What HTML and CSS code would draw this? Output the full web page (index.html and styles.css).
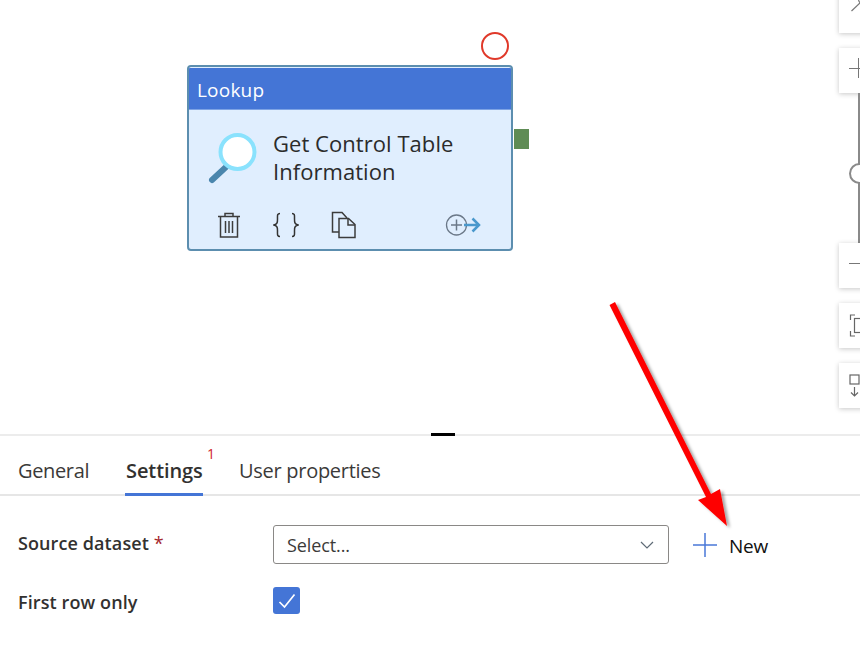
FILE: index.html
```html
<!DOCTYPE html>
<html lang="en">
<head>
<meta charset="utf-8">
<title>Lookup activity</title>
<link rel="stylesheet" href="styles.css">
</head>
<body>
<div class="page">
  <section class="canvas">
    <div class="status-circle"></div>
    <div class="node">
      <div class="node-head">Lookup</div>
      <div class="node-body">
        <div class="node-main">
          <svg class="lookup-icon" width="50" height="52" viewBox="0 0 50 52">
            <path d="M4 48 L18 35" stroke="#4a86ad" stroke-width="6" stroke-linecap="round" fill="none"/>
            <circle cx="29.500" cy="20" r="17" fill="#fff" stroke="#8ae2fd" stroke-width="4"/>
          </svg>
          <div class="node-title">Get Control Table<br>Information</div>
        </div>
        <div class="node-actions">
          <svg class="act-trash" width="24" height="28" viewBox="0 0 24 28" fill="none" stroke="#3c3c3c">
            <path d="M1 5.500H23M8 5V2.500H16V5" stroke-width="1.500"/>
            <path d="M3.500 6V26H20.500V6" stroke-width="1.500"/>
            <path d="M8.500 10V22M12 10V22M15.500 10V22" stroke-width="1.500"/>
          </svg>
          <svg class="act-code" width="26" height="28" viewBox="0 0 26 28" fill="none" stroke="#333" stroke-width="1.500">
            <path d="M7 2.500C4 2.500 4.500 4.500 4.500 8C4.500 11.500 4.500 13 1 14C4.500 15 4.500 16.500 4.500 20C4.500 23.500 4 25.500 7 25.500"/>
            <path d="M19 2.500C22 2.500 21.500 4.500 21.500 8C21.500 11.500 21.500 13 25 14C21.500 15 21.500 16.500 21.500 20C21.500 23.500 22 25.500 19 25.500"/>
          </svg>
          <svg class="act-copy" width="26" height="28" viewBox="0 0 26 28" fill="none" stroke="#3c3c3c" stroke-width="1.500">
            <path d="M8 21H1.500V1.500H11L16 7"/>
            <path d="M8 7.500H17.500L24 13.500V26.500H8Z"/>
            <path d="M17 8V14H24"/>
          </svg>
          <svg class="act-add" width="36" height="24" viewBox="0 0 36 24" fill="none">
            <circle cx="11.500" cy="12" r="10" stroke="#6b7888" stroke-width="1.300"/>
            <path d="M6 12H17M11.500 6.500V17.500" stroke="#6b7888" stroke-width="1.500"/>
            <path d="M19 12H34M27.500 5.500L34 12L27.500 18.500" stroke="#4a98cc" stroke-width="2.500"/>
          </svg>
        </div>
      </div>
    </div>
    <div class="node-port"></div>

    <div class="tool tool-search">
      <svg width="20" height="20" viewBox="0 0 20 20" fill="none" stroke="#777" stroke-width="1.200"><circle cx="14" cy="6" r="5.500"/><path d="M10 10L1.500 18"/></svg>
    </div>
    <div class="tool tool-plus"><span class="bar-h"></span><span class="bar-v"></span></div>
    <div class="slider-track"></div>
    <div class="slider-thumb"></div>
    <div class="tool tool-minus"><span class="bar-h"></span></div>
    <div class="tool tool-fit">
      <svg width="20" height="24" viewBox="0 0 20 24" fill="none" stroke="#666" stroke-width="1.200"><path d="M6 1H1.500V6M1.500 17V22H6"/><rect x="5.500" y="4.500" width="16" height="14"/></svg>
    </div>
    <div class="tool tool-layout">
      <svg width="20" height="24" viewBox="0 0 20 24" fill="none" stroke="#666" stroke-width="1.200"><rect x="1" y="1" width="9" height="9"/><path d="M5.500 13V22M2 18.500L5.500 22L9 18.500"/></svg>
    </div>
    <div class="handle"></div>
  </section>

  <section class="panel">
    <nav class="tabs">
      <div class="tab tab-general">General</div>
      <div class="tab tab-active">Settings<sup class="tab-badge">1</sup></div>
      <div class="tab tab-user">User properties</div>
    </nav>
    <div class="form">
      <div class="row row-source">
        <label class="field-label">Source dataset <span class="req">*</span></label>
        <div class="select">
          <span>Select...</span>
          <svg width="14" height="8" viewBox="0 0 14 8" fill="none" stroke="#5f6b76" stroke-width="1.200"><path d="M1 1L7 7L13 1"/></svg>
        </div>
        <div class="new-btn">
          <svg width="24" height="24" viewBox="0 0 24 24" fill="none" stroke="#4a78d8" stroke-width="1.500"><path d="M0 12H24M12 0V24"/></svg>
          <span>New</span>
        </div>
      </div>
      <div class="row row-first">
        <label class="field-label">First row only</label>
        <div class="checkbox">
          <svg width="18" height="16" viewBox="0 0 18 16" fill="none" stroke="#fff" stroke-width="1.700"><path d="M1.500 9L6.500 14L16.500 1.500"/></svg>
        </div>
      </div>
    </div>
  </section>

  <svg class="annotation" width="860" height="669" viewBox="0 0 860 669">
    <defs>
      <filter id="arrow-shadow" x="-20%" y="-20%" width="140%" height="140%"><feDropShadow dx="3" dy="2" stdDeviation="1.500" flood-color="#000" flood-opacity="0.350"/></filter>
    </defs>
    <g filter="url(#arrow-shadow)">
      <path d="M609.500 305L615 302L711 494L720 489L727 526L698 500L706 497Z" fill="#fe0000"/>
    </g>
  </svg>
</div>
</body>
</html>
```

FILE: styles.css
```css
* { box-sizing: border-box; }

html, body {
  margin: 0;
  padding: 0;
  background: #fff;
}

.page {
  position: relative;
  width: 860px;
  height: 669px;
  overflow: hidden;
  font-family: "Open Sans", "Noto Sans", sans-serif;
  color: #323130;
}

.canvas {
  position: relative;
  height: 434px;
}

.status-circle {
  position: absolute;
  left: 481px;
  top: 32px;
  width: 28px;
  height: 28px;
  border: 2px solid #e0392a;
  border-radius: 50%;
}

.node {
  position: absolute;
  left: 187px;
  top: 65px;
  width: 326px;
  height: 186px;
  background: #e0eefe;
  border: 2px solid #5c8eaf;
  border-radius: 4px;
  padding-top: 1px;
  overflow: hidden;
}

.node-head {
  height: 42px;
  padding-left: 8px;
  background: #4475d6;
  border-bottom: 1px solid #7ea3e4;
  color: #fff;
  font-size: 19px;
  line-height: 44px;
  letter-spacing: 0.200px;
}

.node-main {
  display: flex;
  padding: 21px 0 0 19px;
  gap: 15px;
}

.lookup-icon {
  flex: none;
  margin-top: 1px;
}

.node-title {
  font-size: 22px;
  line-height: 28px;
  letter-spacing: 0.050px;
  color: #2b2b2b;
  margin-top: -2px;
}

.node-actions {
  display: flex;
  align-items: center;
  padding-left: 28px;
  margin-top: 26px;
}

.act-code { margin-left: 32px; }
.act-copy { margin-left: 32px; }
.act-add { margin-left: 88px; }

.node-port {
  position: absolute;
  left: 514px;
  top: 129px;
  width: 15px;
  height: 20px;
  background: #5f8c55;
}

.tool {
  position: absolute;
  left: 839px;
  width: 40px;
  height: 45px;
  background: #fff;
  box-shadow: 0 1px 5px rgba(0, 0, 0, 0.220);
}

.tool-search { top: -12px; }
.tool-plus { top: 48px; }
.tool-minus { top: 243px; }
.tool-fit { top: 303px; }
.tool-layout { top: 363px; }

.tool svg {
  position: absolute;
  left: 10px;
  top: 11px;
}

.tool-search svg { top: 5px; left: 11px; }

.bar-h {
  position: absolute;
  left: 10px;
  top: 20px;
  width: 20px;
  height: 1px;
  background: #777;
}

.bar-v {
  position: absolute;
  left: 19px;
  top: 10px;
  width: 1px;
  height: 20px;
  background: #777;
}

.slider-track {
  position: absolute;
  left: 858px;
  top: 93px;
  width: 2px;
  height: 150px;
  background: #8a8a8a;
}

.slider-thumb {
  position: absolute;
  left: 849px;
  top: 163px;
  width: 21px;
  height: 21px;
  background: #fff;
  border: 2px solid #8a8a8a;
  border-radius: 50%;
}

.handle {
  position: absolute;
  left: 431px;
  top: 433px;
  width: 24px;
  height: 3px;
  background: #000;
}

.panel {
  border-top: 2px solid #ececec;
}

.tabs {
  display: flex;
  height: 60px;
  padding-left: 18px;
  border-bottom: 2px solid #e6e6e6;
}

.tab {
  position: relative;
  height: 60px;
  font-size: 20px;
  line-height: 70px;
  white-space: nowrap;
  color: #3b3a39;
}

.tab-general { letter-spacing: -0.350px; width: 107px; }
.tab-user { letter-spacing: -0.280px; margin-left: 36px; }

.tab-active {
  font-weight: 600;
  border-bottom: 3px solid #4475d6;
  color: #323130;
  width: 78px;
  letter-spacing: -0.100px;
  text-indent: 1px;
}

.tab-badge {
  position: absolute;
  left: 81px;
  top: 9px;
  font-size: 14px;
  font-weight: 400;
  line-height: 18px;
  letter-spacing: 0;
  color: #d0262a;
}

.form {
  padding-left: 18px;
}

.row {
  display: flex;
  align-items: center;
}

.row-source {
  margin-top: 29px;
  height: 39px;
}

.row-first {
  margin-top: 23px;
  height: 27px;
}

.field-label {
  width: 255px;
  flex: none;
  font-size: 18px;
  font-weight: 600;
  letter-spacing: 0.100px;
  color: #323130;
}

.row-source .field-label { margin-top: -4px; }
.row-first .field-label { margin-top: 2px; }

.req {
  color: #a4262c;
  font-weight: 400;
}

.select {
  display: flex;
  align-items: center;
  justify-content: space-between;
  width: 396px;
  height: 39px;
  padding: 0 14px 0 13px;
  border: 1px solid #8a8886;
  border-radius: 3px;
  font-size: 18px;
  letter-spacing: -0.100px;
  color: #3b3a39;
}

.new-btn {
  display: flex;
  align-items: center;
  gap: 12px;
  margin-left: 24px;
  font-size: 19px;
  letter-spacing: -0.200px;
  color: #111;
}

.new-btn span { margin-top: 3px; }

.checkbox {
  display: flex;
  align-items: center;
  justify-content: center;
  width: 27px;
  height: 27px;
  background: #4475d6;
  border-radius: 3px;
}

.annotation {
  position: absolute;
  left: 0;
  top: 0;
  pointer-events: none;
}
```
